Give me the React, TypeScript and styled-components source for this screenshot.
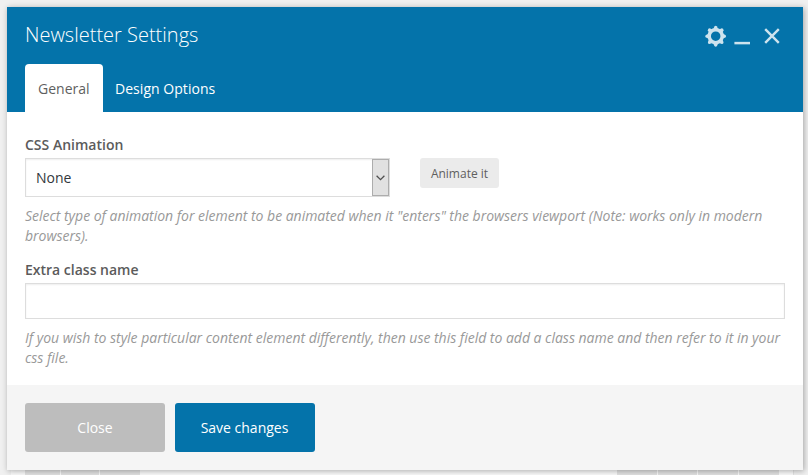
import React from "react";
import styled, { createGlobalStyle } from "styled-components";

const GlobalStyle = createGlobalStyle`
  * { box-sizing: border-box; }
  body { margin: 0; background: #f0f0f0; font-family: "Open Sans", sans-serif; }
  button, input { font-family: inherit; margin: 0; }
`;

const Page = styled.div`
  position: relative;
  width: 808px;
  height: 475px;
  overflow: hidden;
  display: flex;
  flex-direction: column;
  justify-content: flex-end;
  background: #f0f0f0;
`;

const Backdrop = styled.div`
  height: 7px;
  margin: 0 14px 0 11px;
  padding: 0 14px;
  display: flex;
  justify-content: space-between;
  background: #fafafa;
  border-right: 1px solid #e3e3e3;
`;

const BlockGroup = styled.div`
  display: flex;
  gap: 1px;
`;

const Block = styled.div<{ $width: number }>`
  width: ${(p) => p.$width}px;
  background: #e1e1e1;
`;

const Dialog = styled.section`
  position: absolute;
  left: 7px;
  top: 7px;
  width: 796px;
  height: 463px;
  display: flex;
  flex-direction: column;
  background: #fff;
  box-shadow: 1px 1px 6px rgba(0, 0, 0, 0.32);
`;

const Header = styled.header`
  height: 105px;
  flex: none;
  padding: 0 18px;
  display: flex;
  flex-direction: column;
  justify-content: space-between;
  background: #0473aa;
`;

const TitleRow = styled.div`
  height: 57px;
  display: flex;
  justify-content: space-between;
`;

const Title = styled.h1`
  margin: 14px 0 0;
  font-size: 20px;
  line-height: 28px;
  font-weight: 300;
  color: #fff;
`;

const Controls = styled.svg`
  width: 80px;
  height: 24px;
  margin-top: 17px;
`;

const Tabs = styled.nav`
  display: flex;
`;

const Tab = styled.button<{ $active?: boolean }>`
  height: 48px;
  width: ${(p) => (p.$active ? "78px" : "125px")};
  padding: 2px 0 0 ${(p) => (p.$active ? "13px" : "12px")};
  border: 0;
  border-radius: 4px 4px 0 0;
  background: ${(p) => (p.$active ? "#fff" : "transparent")};
  color: ${(p) => (p.$active ? "#5f5f5f" : "#fff")};
  font-size: 14px;
  line-height: 20px;
  letter-spacing: ${(p) => (p.$active ? "0" : "0.04px")};
  text-align: left;
  white-space: nowrap;
`;

const Body = styled.main`
  flex: 1;
  padding: 23px 18px 0;
`;

const Field = styled.div`
  margin-bottom: 14px;
`;

const Label = styled.div`
  height: 20px;
  margin-bottom: 3px;
  font-size: 14px;
  line-height: 20px;
  font-weight: 600;
  color: #5b5b5b;
`;

const Row = styled.div`
  display: flex;
  align-items: flex-start;
  gap: 30px;
`;

const Select = styled.div`
  width: 365px;
  height: 39px;
  padding-left: 10px;
  display: flex;
  align-items: center;
  justify-content: space-between;
  border: 1px solid #ddd;
  box-shadow: inset 0 1px 2px rgba(0, 0, 0, 0.07);
  font-size: 14px;
  color: #32373c;
`;

const SelectArrow = styled.span`
  width: 17px;
  height: 37px;
  padding-right: 1px;
  display: flex;
  align-items: center;
  justify-content: center;
  border: 1px solid #adadad;
  background: #e1e1e1;
`;

const AnimateButton = styled.button`
  width: 79px;
  height: 30px;
  padding: 1px 0 0;
  border: 0;
  border-radius: 3px;
  background: #ebebeb;
  color: #5f5f5f;
  font-size: 12px;
`;

const TextInput = styled.input`
  display: block;
  width: 760px;
  height: 36px;
  padding: 0 10px;
  border: 1px solid #ddd;
  box-shadow: inset 0 1px 2px rgba(0, 0, 0, 0.07);
  font-size: 14px;
`;

const Hint = styled.p`
  margin: 9px 0 0;
  font-size: 14px;
  line-height: 20px;
  letter-spacing: -0.015px;
  font-style: italic;
  color: #999;
`;

const Footer = styled.footer`
  height: 85px;
  flex: none;
  padding: 18px;
  display: flex;
  gap: 10px;
  background: #f5f5f5;
`;

const ActionButton = styled.button<{ $primary?: boolean }>`
  width: 140px;
  height: 49px;
  padding: 0 ${(p) => (p.$primary ? "1px" : "0")} 1px 0;
  border: 0;
  border-radius: 3px;
  background: ${(p) => (p.$primary ? "#0473aa" : "#bdbdbd")};
  color: #fff;
  font-size: 14px;
`;

const TEETH = [0, 45, 90, 135, 180, 225, 270, 315];

function WindowControls() {
  return (
    <Controls viewBox="0 0 80 24">
      <g fill="#cde3ee" stroke="#cde3ee">
        <circle cx="10.7" cy="12.2" r="6.5" fill="none" strokeWidth="3.5" />
        {TEETH.map((a) => (
          <path
            key={a}
            d="M8.3 5 9.4 2.4Q10.7 1.1 12 2.4L13.1 5Z"
            stroke="none"
            transform={`rotate(${a} 10.7 12.2)`}
          />
        ))}
        <path d="M29.4 19.1H45" strokeWidth="2.5" fill="none" />
        <path d="M60.2 5.2 73.8 18.8M73.8 5.2 60.2 18.8" strokeWidth="2.4" fill="none" />
      </g>
    </Controls>
  );
}

export default function App() {
  return (
    <>
      <GlobalStyle />
      <Page>
        <Backdrop>
          <BlockGroup>
            {[35, 38, 40].map((w, i) => (
              <Block key={i} $width={w} />
            ))}
          </BlockGroup>
          <BlockGroup>
            {[40, 39, 40, 40].map((w, i) => (
              <Block key={i} $width={w} />
            ))}
          </BlockGroup>
        </Backdrop>
        <Dialog>
          <Header>
            <TitleRow>
              <Title>Newsletter Settings</Title>
              <WindowControls />
            </TitleRow>
            <Tabs>
              <Tab $active>General</Tab>
              <Tab>Design Options</Tab>
            </Tabs>
          </Header>
          <Body>
            <Field>
              <Label>CSS Animation</Label>
              <Row>
                <Select>
                  None
                  <SelectArrow>
                    <svg width="9" height="6" viewBox="0 0 9 6">
                      <path d="M.6 .8 4.5 4.7 8.4 .8" fill="none" stroke="#505050" strokeWidth="1.3" />
                    </svg>
                  </SelectArrow>
                </Select>
                <AnimateButton>Animate it</AnimateButton>
              </Row>
              <Hint>
                Select type of animation for element to be animated when it "enters" the browsers viewport (Note: works
                only in modern browsers).
              </Hint>
            </Field>
            <Field>
              <Label>Extra class name</Label>
              <TextInput />
              <Hint>
                If you wish to style particular content element differently, then use this field to add a class name
                and then refer to it in your css file.
              </Hint>
            </Field>
          </Body>
          <Footer>
            <ActionButton>Close</ActionButton>
            <ActionButton $primary>Save changes</ActionButton>
          </Footer>
        </Dialog>
      </Page>
    </>
  );
}
